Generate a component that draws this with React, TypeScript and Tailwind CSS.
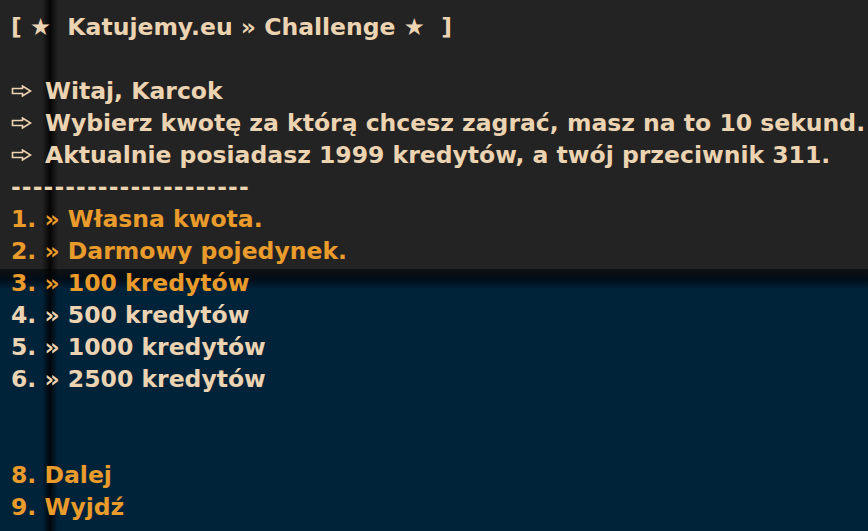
const cream = "text-[#ecd4b2]";
const orange = "text-[#e99b2b]";

function Arrow() {
  return (
    <svg width="21" height="12" viewBox="0 0 21 12" className="mr-[13px] shrink-0 -mt-[2px]">
      <path d="M1.5 3.5 H11.5 V1 L19.5 6 L11.5 11 V8.5 H1.5 Z" fill="none" stroke="#ecd4b2" strokeWidth="1.6" strokeLinejoin="miter" />
    </svg>
  );
}

function Line({ children, className = cream }: { children?: React.ReactNode; className?: string }) {
  return <div className={`flex items-center h-[32px] whitespace-pre ${className}`}>{children}</div>;
}

const options = [
  { n: 1, label: "Własna kwota.", hot: true },
  { n: 2, label: "Darmowy pojedynek.", hot: true },
  { n: 3, label: "100 kredytów", hot: true },
  { n: 4, label: "500 kredytów", hot: false },
  { n: 5, label: "1000 kredytów", hot: false },
  { n: 6, label: "2500 kredytów", hot: false },
];

export default function App() {
  return (
    <div className="relative w-[868px] h-[531px] overflow-hidden bg-[#00233a]">
      {/* backdrop: grey panel, its shadow, then the navy area */}
      <div className="flex flex-col h-full">
        <div className="h-[269px] bg-[#232323]" />
        <div className="h-[20px] bg-gradient-to-b from-[#111111] via-[#020d17] to-[#00233a]" />
      </div>
      <div className="absolute top-0 bottom-0 left-[42px] w-[16px] bg-gradient-to-r from-transparent via-black/85 to-transparent" />

      {/* menu text */}
      <div
        className="absolute top-[12px] left-[11px] font-bold text-[23.5px]"
        style={{ fontFamily: '"DejaVu Sans", Verdana, sans-serif' }}
      >
        <Line>{"[ ★  Katujemy.eu » Challenge ★  ]"}</Line>
        <Line />
        <Line><Arrow />Witaj, Karcok</Line>
        <Line><Arrow />Wybierz kwotę za którą chcesz zagrać, masz na to 10 sekund.</Line>
        <Line><Arrow />Aktualnie posiadasz 1999 kredytów, a twój przeciwnik 311.</Line>
        <Line className={`${cream} tracking-[1.1px]`}>----------------------</Line>
        {options.map((o) => (
          <Line key={o.n} className={o.hot ? orange : cream}>
            {`${o.n}. » `}
            {o.label}
          </Line>
        ))}
        <Line />
        <Line />
        <Line className={orange}>8. Dalej</Line>
        <Line className={orange}>9. Wyjdź</Line>
      </div>
    </div>
  );
}
